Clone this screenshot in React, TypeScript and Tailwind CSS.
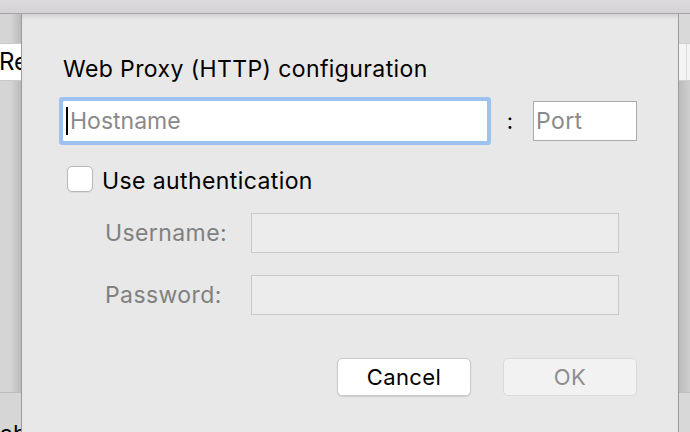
export default function App() {
  return (
    <div className="w-[690px] h-[432px] overflow-hidden flex flex-col bg-[#e8e8e8] font-['Inter','Liberation_Sans',sans-serif] text-black">
      {/* window title bar behind the sheet */}
      <div className="h-[14px] shrink-0 bg-linear-to-b from-[#dddbdd] to-[#d3d1d3] border-b border-[#a4a4a4]" />

      <div className="flex flex-1 min-h-0">
        {/* left edge of the window behind */}
        <div className="w-[21px] shrink-0 flex flex-col overflow-hidden bg-linear-to-r from-[#d5d5d5] from-50% to-[#bababa]">
          <div className="h-[29px] shrink-0" />
          <div className="h-[38px] shrink-0 bg-white border-y border-[#cacaca] flex items-center">
            <span className="text-[24px] leading-[30px] whitespace-nowrap -ml-[1px]">Re</span>
          </div>
          <div className="flex-1 border-b border-[#bcbcbc]" />
          <div className="h-[39px] shrink-0 pt-[27px] bg-[#d6d6d6]">
            <span className="text-[23px] leading-[28px] whitespace-nowrap">ab</span>
          </div>
        </div>

        {/* sheet */}
        <div className="w-[658px] shrink-0 border-x border-[#9c9c9c] bg-[#e8e8e8] shadow-[inset_0_5px_5px_-3px_rgba(0,0,0,0.12)] flex flex-col pl-[41px] pr-[41px] pt-[41px] tracking-[0.4px]">
          <div className="text-[23px] leading-[28px]">Web Proxy (HTTP) configuration</div>

          <div className="mt-[18px] flex items-center">
            <div className="w-[424px] h-[40px] bg-white rounded-[1px] shadow-[0_0_0_4px_#9dc2ef] flex items-center pl-[3px]">
              <span className="w-[2px] h-[28px] bg-black" />
              <span className="ml-[2px] text-[23px] leading-[28px] text-[#8a8a8a] tracking-[0px]">Hostname</span>
            </div>
            <div className="w-[46px] text-center text-[22px] leading-[28px]">:</div>
            <div className="w-[104px] h-[40px] bg-white border border-[#ababab] flex items-center pl-[2px]">
              <span className="text-[23px] leading-[28px] text-[#8a8a8a]">Port</span>
            </div>
          </div>

          <div className="mt-[25px] h-[26px] flex items-start">
            <div className="ml-[4px] w-[26px] h-[26px] shrink-0 bg-white border border-[#b7b7b7] rounded-[5px] shadow-[0_1px_1px_rgba(0,0,0,0.06)]" />
            <span className="ml-[9px] mt-[1px] text-[23px] leading-[28px]">Use authentication</span>
          </div>

          <div className="mt-[21px] flex items-center pl-[42px]">
            <span className="w-[146px] text-[23px] leading-[28px] text-[#808080]">Username:</span>
            <div className="w-[368px] h-[40px] bg-[#ececec] border border-[#c9c9c9]" />
          </div>

          <div className="mt-[22px] flex items-center pl-[42px]">
            <span className="w-[146px] text-[23px] leading-[28px] text-[#808080]">Password:</span>
            <div className="w-[368px] h-[40px] bg-[#ececec] border border-[#c9c9c9]" />
          </div>

          <div className="mt-[43px] flex justify-end gap-[32px]">
            <button className="w-[134px] h-[38px] bg-white rounded-[5px] border border-[#c8c8c8] shadow-[0_1px_1px_rgba(0,0,0,0.12)] text-[22px] leading-[28px] text-black">
              Cancel
            </button>
            <button className="w-[134px] h-[38px] bg-[#f2f2f2] rounded-[5px] border border-[#dadada] text-[22px] leading-[28px] text-[#8e8e8e]">
              OK
            </button>
          </div>
        </div>

        {/* right edge of the window behind */}
        <div className="w-[11px] shrink-0 flex flex-col overflow-hidden">
          <div className="h-[29px] shrink-0 bg-[#d9d9d9]" />
          <div className="h-[38px] shrink-0 bg-[#f4f4f4] border-y border-[#cfcfcf] flex">
            <div className="w-[8px] border-r border-[#dcdcdc]" />
          </div>
          <div className="flex-1 bg-linear-to-r from-[#bdbdbd] to-[#cfcfcf] from-10% border-b border-[#bcbcbc]" />
          <div className="h-[39px] shrink-0 bg-[#d8d8d8]" />
        </div>
      </div>
    </div>
  );
}
